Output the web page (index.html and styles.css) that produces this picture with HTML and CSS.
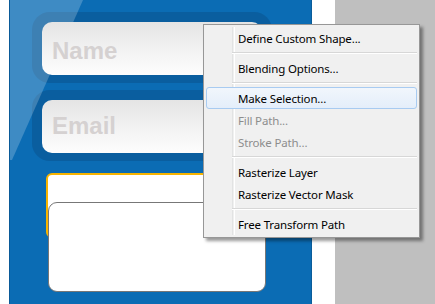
FILE: index.html
```html
<!DOCTYPE html>
<html>
<head>
<meta charset="utf-8">
<link rel="stylesheet" href="styles.css">
</head>
<body>
<div class="page">
  <div class="edge"></div>
  <div class="panel">
    <div class="gloss"></div>
    <div class="field field-name"><div class="field-inner">Name</div></div>
    <div class="field field-email"><div class="field-inner">Email</div></div>
    <div class="ta-focus"></div>
    <div class="ta-box"></div>
  </div>
  <div class="strip"></div>
  <div class="canvas"></div>

  <div class="menu">
    <div class="item">Define Custom Shape...</div>
    <div class="sep"></div>
    <div class="item">Blending Options...</div>
    <div class="sep"></div>
    <div class="item hover">Make Selection...</div>
    <div class="item disabled">Fill Path...</div>
    <div class="item disabled">Stroke Path...</div>
    <div class="sep"></div>
    <div class="item">Rasterize Layer</div>
    <div class="item">Rasterize Vector Mask</div>
    <div class="sep"></div>
    <div class="item">Free Transform Path</div>
  </div>
</div>
</body>
</html>
```

FILE: styles.css
```css
html, body {
  margin: 0;
  padding: 0;
  background: #ffffff;
}

.page {
  position: relative;
  display: flex;
  width: 435px;
  height: 304px;
  overflow: hidden;
}

.edge {
  width: 9px;
  background: #ffffff;
}

.panel {
  position: relative;
  width: 301px;
  border-left: 1px solid #0a5a98;
  border-right: 1px solid #0a5c9a;
  background: #0b6cb4;
  display: flex;
  flex-direction: column;
  align-items: flex-start;
}

.gloss {
  position: absolute;
  left: 0;
  top: 0;
  width: 80px;
  height: 170px;
  background: rgba(255, 255, 255, 0.21);
  clip-path: polygon(0 0, 73px 0, 2px 160px, 0 160px);
  z-index: 1;
  pointer-events: none;
}

.field {
  box-sizing: border-box;
  width: 240px;
  height: 71px;
  margin-left: 22px;
  padding: 10px 0 8px 10px;
  border-radius: 18px;
  background: #0a5e9f;
}

.field-name {
  margin-top: 12px;
}

.field-email {
  margin-top: 7px;
}

.field-inner {
  position: relative;
  z-index: 2;
  box-sizing: border-box;
  height: 53px;
  width: 220px;
  padding: 5px 0 0 10px;
  border-radius: 10px;
  background: linear-gradient(#e4e4e4, #f3f3f3 55%, #fdfdfd);
  font-family: "Liberation Sans", Arial, sans-serif;
  font-weight: bold;
  font-size: 24px;
  line-height: 48px;
  color: #d5d1d1;
}

.field-email .field-inner {
  padding-top: 2px;
}

.ta-focus {
  position: relative;
  z-index: 2;
  box-sizing: border-box;
  width: 220px;
  height: 65px;
  margin-top: 12px;
  margin-left: 36px;
  border: 2px solid #f7b400;
  border-radius: 6px;
  background: #ffffff;
}

.ta-box {
  position: relative;
  z-index: 3;
  box-sizing: border-box;
  width: 218px;
  height: 90px;
  margin-top: -36px;
  margin-left: 38px;
  border: 1px solid #777777;
  border-radius: 9px;
  background: #ffffff;
}

.strip {
  width: 23px;
  background: #ffffff;
}

.canvas {
  flex: 1;
  background: #bfbfbf;
}

.menu {
  position: absolute;
  left: 203px;
  top: 24px;
  box-sizing: border-box;
  width: 217px;
  height: 214px;
  padding: 2px;
  border: 1px solid #979797;
  background: #f0f0f0;
  box-shadow: 3px 3px 3px rgba(0, 0, 0, 0.4);
  z-index: 10;
  font-family: "Noto Sans", "Open Sans", sans-serif;
  font-size: 11.5px;
  letter-spacing: -0.15px;
  color: #000000;
}

.menu::before {
  content: "";
  position: absolute;
  left: 28px;
  top: 2px;
  bottom: 2px;
  width: 1px;
  border-left: 1px solid #e2e3e3;
  border-right: 1px solid #ffffff;
}

.item {
  position: relative;
  box-sizing: border-box;
  height: 22px;
  line-height: 21px;
  padding-left: 31px;
  border: 1px solid transparent;
  border-radius: 3px;
  white-space: nowrap;
}

.item.hover {
  border-color: #a8cbf1;
  background: linear-gradient(#f1f6fc, #e4eefa);
  z-index: 1;
}

.item.disabled {
  color: #8d8d8d;
}

.sep {
  position: relative;
  height: 8px;
  margin-left: 26px;
}

.sep::after {
  content: "";
  position: absolute;
  left: 0;
  right: 0;
  top: 3px;
  border-top: 1px solid #d7d7d7;
  border-bottom: 1px solid #ffffff;
  height: 0;
}
```
